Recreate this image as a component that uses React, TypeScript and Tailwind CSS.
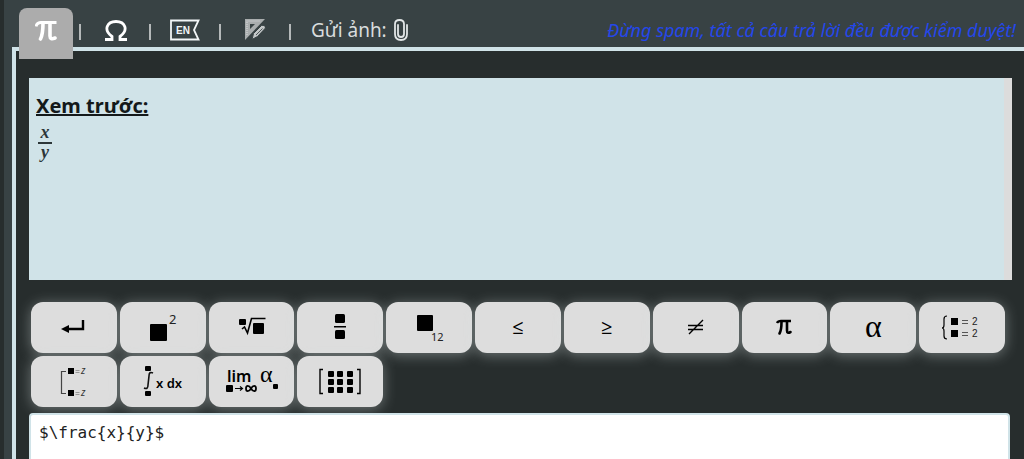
import { useState, type ReactNode } from "react";

type MathKey = {
  name: string;
  insert: string;
  icon: ReactNode;
};

const sans = "font-['Noto_Sans','Open_Sans',sans-serif]";

const Glyph = ({ children }: { children: ReactNode }) => (
  <svg
    viewBox="0 0 60 44"
    className="w-[60px] h-11 font-['Noto_Sans',sans-serif]"
    fill="#000"
    aria-hidden="true"
  >
    {children}
  </svg>
);

const keys: MathKey[] = [
  {
    name: "Xuống dòng",
    insert: "\\\\",
    icon: (
      <Glyph>
        <path d="M39 14v9H24" fill="none" stroke="#000" strokeWidth="2.4" />
        <path d="M17 23l8-4v8z" />
      </Glyph>
    ),
  },
  {
    name: "Lũy thừa",
    insert: "^{2}",
    icon: (
      <Glyph>
        <rect x="17" y="18" width="17" height="17" rx="1" />
        <text x="36" y="18" fontSize="13" fill="#222">
          2
        </text>
      </Glyph>
    ),
  },
  {
    name: "Căn bậc n",
    insert: "\\sqrt[n]{x}",
    icon: (
      <Glyph>
        <rect x="17" y="13" width="7" height="6" rx="1" />
        <path
          d="M20 23l2.500-2 3 6 4-14.500h14"
          fill="none"
          stroke="#000"
          strokeWidth="1.600"
        />
        <rect x="31" y="17" width="11" height="11" rx="1" />
      </Glyph>
    ),
  },
  {
    name: "Phân số",
    insert: "\\frac{x}{y}",
    icon: (
      <Glyph>
        <rect x="25" y="8" width="10" height="9" rx="1.5" />
        <rect x="24" y="20" width="12" height="1.5" />
        <rect x="25" y="24" width="10" height="9" rx="1.5" />
      </Glyph>
    ),
  },
  {
    name: "Chỉ số dưới",
    insert: "_{12}",
    icon: (
      <Glyph>
        <rect x="18" y="9" width="16" height="16" rx="1" />
        <text x="32" y="35" fontSize="11" fill="#222">
          12
        </text>
      </Glyph>
    ),
  },
  {
    name: "Nhỏ hơn hoặc bằng",
    insert: "\\le",
    icon: <span className="pb-0.5 font-medium">≤</span>,
  },
  {
    name: "Lớn hơn hoặc bằng",
    insert: "\\ge",
    icon: <span className="pb-0.5 font-medium">≥</span>,
  },
  {
    name: "Khác",
    insert: "\\ne",
    icon: (
      <Glyph>
        <path
          d="M22 19.500h15M22 23.500h15M23 28L37 14"
          fill="none"
          stroke="#000"
          strokeWidth="1.4"
        />
      </Glyph>
    ),
  },
  {
    name: "Pi",
    insert: "\\pi",
    icon: (
      <Glyph>
        <path
          d="M23 17q1-2 4-2h10"
          fill="none"
          stroke="#000"
          strokeWidth="2.4"
        />
        <path
          d="M27.500 16q0 8-2 11.500M33 16v8.500q0 3.500 3.500 1.500"
          fill="none"
          stroke="#000"
          strokeWidth="2.6"
          strokeLinecap="round"
        />
      </Glyph>
    ),
  },
  {
    name: "Alpha",
    insert: "\\alpha",
    icon: (
      <span className="pb-1 font-['Liberation_Serif',serif] text-[32px]">
        α
      </span>
    ),
  },
  {
    name: "Hệ phương trình",
    insert: "\\begin{cases}\\end{cases}",
    icon: (
      <Glyph>
        <path
          d="M15 10q-3 0-3 3v6q0 3-2 3q2 0 2 3v5q0 3 3 3"
          fill="none"
          stroke="#000"
          strokeWidth="1.2"
        />
        <rect x="19" y="12" width="7" height="7" />
        <rect x="19" y="24" width="7" height="7" />
        <path d="M30 14.500h6m-6 3h6M30 26.500h6m-6 3h6" stroke="#555" />
        <g
          fontSize="10"
          fill="#222"
          className="font-['Liberation_Sans',sans-serif]"
        >
          <text x="40" y="19">
            2
          </text>
          <text x="40" y="31">
            2
          </text>
        </g>
      </Glyph>
    ),
  },
  {
    name: "Hệ tuyển",
    insert: "\\left[\\begin{array}{l}\\end{array}\\right.",
    icon: (
      <Glyph>
        <path
          d="M22 11.500h-4.500v22H22"
          fill="none"
          stroke="#444"
          strokeWidth="1.2"
        />
        <rect x="24" y="8" width="6" height="6" />
        <rect x="24" y="30" width="6" height="6" />
        <path
          d="M31.500 10.500h4m-4 2h4M31.500 32.500h4m-4 2h4"
          stroke="#888"
          strokeWidth=".8"
        />
        <text x="37" y="14" fontSize="10" fontStyle="italic" fill="#333">
          z
        </text>
        <text x="37" y="36" fontSize="10" fontStyle="italic" fill="#333">
          z
        </text>
      </Glyph>
    ),
  },
  {
    name: "Tích phân",
    insert: "\\int_{a}^{b} x dx",
    icon: (
      <Glyph>
        <rect x="12" y="6" width="6" height="5" rx="1" />
        <path
          d="M20 13q-4-2-4 3l-1 9q0 5-4 3"
          fill="none"
          stroke="#111"
          strokeWidth="1.6"
        />
        <rect x="12" y="31" width="6" height="5" rx="1" />
        <text x="23" y="28" fontSize="13" fontWeight="600">
          x dx
        </text>
      </Glyph>
    ),
  },
  {
    name: "Giới hạn",
    insert: "\\lim_{x \\to \\infty}",
    icon: (
      <Glyph>
        <text x="5" y="22" fontSize="16" fontWeight="600">
          lim
        </text>
        <rect x="4" y="25" width="7" height="7" rx="1" />
        <path
          d="M13 28.500h7m-2-2l2.500 2-2.500 2"
          fill="none"
          stroke="#000"
          strokeWidth="1.2"
        />
        <path
          d="M29 28.500c-2-3.500-5-3.500-5 0s3 3.500 5 0 5-3.500 5 0-3 3.500-5 0z"
          fill="none"
          stroke="#000"
          strokeWidth="1.8"
        />
        <text
          x="38"
          y="22"
          fontSize="24"
          className="font-['Liberation_Serif',serif]"
        >
          α
        </text>
        <rect x="51" y="24" width="5" height="5" rx="1" />
      </Glyph>
    ),
  },
  {
    name: "Ma trận",
    insert: "\\begin{bmatrix}\\end{bmatrix}",
    icon: (
      <Glyph>
        <path
          d="M13 9.500h-3v24h3M47 9.500h3v24h-3"
          fill="none"
          stroke="#000"
          strokeWidth="1.4"
        />
        {[11, 19, 27].map((y) =>
          [18, 27, 37].map((x) => (
            <rect key={`${x}-${y}`} x={x} y={y} width="6" height="6" rx="1" />
          ))
        )}
      </Glyph>
    ),
  },
];

const Separator = () => <span className="w-0.5 h-4 mt-1 bg-[#b5b9ba]" />;

const Toolbar = () => (
  <header className="flex items-start h-[47px] pl-[7px] pr-2 -ml-1">
    <div className="flex items-start text-white">
      <button
        type="button"
        aria-label="Công thức"
        className="relative z-10 flex justify-center items-center w-[54px] h-[51px] mt-2 pb-1.5 rounded-t-lg bg-[#acacac]"
      >
        <svg viewBox="0 0 22 22" className="w-[22px] h-[22px]" fill="none">
          <path d="M1 6.500q1-4 5-4h15.500" stroke="#fff" strokeWidth="3" />
          <path
            d="M8 3q0 11-2.500 16M15 3v13q0 4 5 2"
            stroke="#fff"
            strokeWidth="3.600"
            strokeLinecap="round"
          />
        </svg>
      </button>
      <div className="flex items-center h-6 mt-[18px] ml-1.5">
        <Separator />
        <button
          type="button"
          aria-label="Ký hiệu"
          className="flex justify-center w-[68px] pl-0.5"
        >
          <svg viewBox="0 0 24 24" className="w-6 h-6" fill="none">
            <path
              d="M1 21.500h7v-3C-1 12 3 3.500 12 3.500s13 8.500 4 15v3h7"
              stroke="#fff"
              strokeWidth="2.800"
            />
          </svg>
        </button>
        <Separator />
        <button
          type="button"
          aria-label="Tiếng Anh"
          className="flex justify-center w-[68px]"
        >
          <svg viewBox="0 0 30 22" className="w-[30px] h-[22px]">
            <path
              d="M1 1.500h27.500L24 11l4.500 9.500H1z"
              fill="none"
              stroke="#f2f6f7"
              strokeWidth="1.800"
            />
            <text
              x="6"
              y="15"
              fontSize="10"
              fontWeight="700"
              fill="#f2f6f7"
              className="font-['Liberation_Sans',sans-serif]"
            >
              EN
            </text>
          </svg>
        </button>
        <Separator />
        <button
          type="button"
          aria-label="Vẽ hình"
          className="flex justify-center w-[68px]"
        >
          <svg viewBox="0 0 22 24" className="w-[22px] h-6">
            <path
              d="M1 1h20L1 22zM6 6v5l5-5z"
              fill="#a9adae"
              fillRule="evenodd"
            />
            <path
              d="M2.500 3h14M3 4v13"
              stroke="#d9dcdd"
              strokeDasharray="1 1"
            />
            <path
              d="M8 21.500l1.500-6 8-8q3.500-1 4 2.500l-8 8.500z"
              fill="#c3c7c8"
              stroke="#384244"
              strokeWidth="1"
            />
            <path d="M12 17l6.500-6.500" stroke="#50595b" strokeWidth="1" />
          </svg>
        </button>
        <Separator />
      </div>
      <label
        htmlFor="photo"
        className={`${sans} flex items-center gap-1.5 h-6 mt-[18px] ml-5 text-[19px] text-[#d8dcdd]`}
      >
        Gửi ảnh:
        <svg viewBox="0 0 16 24" className="w-4 h-6" fill="none">
          <path
            d="M5 7v9q0 3 3 3t3-3V6q0-4-4.500-4T2 6v10q0 6 6 6t6-6V7"
            stroke="#e2e6e7"
            strokeWidth="1.800"
            strokeLinecap="round"
          />
        </svg>
      </label>
      <input id="photo" type="file" accept="image/*" className="sr-only" />
    </div>
    <p
      className={`${sans} ml-auto mt-[18px] text-lg leading-6 italic text-[#2447ea] whitespace-nowrap`}
    >
      Đừng spam, tất cả câu trả lời đều được kiểm duyệt!
    </p>
  </header>
);

const Preview = () => (
  <section
    className={`${sans} h-[202px] -mr-0.5 pl-[7px] pt-3.5 bg-[#d0e3e8] border-r-8 border-[#dcdcdc] text-[#14191a]`}
  >
    <h2 className="text-xl leading-7 font-bold underline">Xem trước:</h2>
    <div className="flex flex-col items-center w-3.5 mt-1 ml-0.5 font-['Liberation_Serif',serif] text-lg leading-4 font-bold italic text-[#2c3638]">
      <span className="w-full pb-0.5 text-center border-b-2 border-[#2c3638]">
        x
      </span>
      <span>y</span>
    </div>
  </section>
);

const App = () => {
  const [answer, setAnswer] = useState("$\\frac{x}{y}$");

  const insert = (text: string) => {
    setAnswer((prev) => prev + text);
  };

  return (
    <div className="h-screen overflow-hidden pl-1 bg-[#272d2d]">
      <div className="min-h-full pl-2 bg-[#384244]">
        <div className="pl-1">
          <Toolbar />
        </div>
        <main className="border-l-4 border-t-4 border-[#d0e3e8] bg-[#272d2d]">
          <div className="pl-[13px] pr-3.5 pt-[27px]">
            <Preview />
            <div
              className={`${sans} grid grid-cols-11 gap-[3px] mt-[22px] ml-0.5 mr-[5px] text-xl text-black`}
            >
              {keys.map((key) => (
                <button
                  key={key.name}
                  type="button"
                  aria-label={key.name}
                  onClick={() => insert(key.insert)}
                  className="flex justify-center items-center h-[51px] rounded-xl bg-[#dddddd] leading-6 shadow-[0_2px_14px_rgba(220,230,230,0.4)]"
                >
                  {key.icon}
                </button>
              ))}
            </div>
            <textarea
              aria-label="Câu trả lời"
              rows={8}
              value={answer}
              onChange={(e) => setAnswer(e.target.value)}
              className="relative block w-full mt-1.5 px-2 py-1.5 rounded border-2 border-[#d0e3e8] bg-white font-['DejaVu_Sans_Mono',monospace] text-base text-[#222] resize-none outline-none"
            />
          </div>
        </main>
      </div>
    </div>
  );
};

export default App;
